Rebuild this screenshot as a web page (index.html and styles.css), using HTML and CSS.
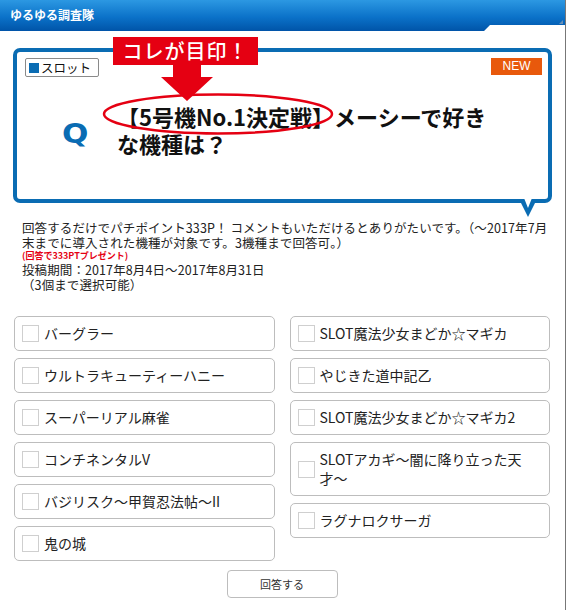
FILE: index.html
```html
<!DOCTYPE html>
<html lang="ja">
<head>
  <meta charset="UTF-8">
  <title>ゆるゆる調査隊</title>
  <link rel="stylesheet" href="styles.css">
</head>
<body>
  <div class="page">
    <div class="topbar">
      <h1>ゆるゆる調査隊</h1>
      <span class="grip"></span>
    </div>
    <div class="main">
      <div class="question">
        <div class="callout">
          コレが目印！
          <svg class="callout-arrow" width="54" height="36" viewBox="0 0 54 36">
            <polygon points="13,-1 41,-1 41,12 53,12 27,36 1,12 13,12" fill="#e50012"/>
          </svg>
        </div>
        <div class="q-head">
          <span class="genre"><i></i>スロット</span>
          <span class="new">NEW</span>
        </div>
        <div class="q-row">
          <span class="q-mark">Q</span>
          <p class="q-text">
            【5号機No.1決定戦】メーシーで好きな機種は？
            <svg class="ring" width="234" height="44" viewBox="0 0 234 44">
              <ellipse cx="117" cy="22" rx="114" ry="19.5" fill="none" stroke="#e50012" stroke-width="2.5"/>
            </svg>
          </p>
        </div>
        <svg class="tail" width="18" height="18" viewBox="0 0 18 18">
          <polygon points="0,0 18,0 9,18" fill="#0a6cb3"/>
          <polygon points="5,-1 13,-1 9,9" fill="#fff"/>
        </svg>
      </div>

      <div class="desc">
        <p>回答するだけでパチポイント333P！ コメントもいただけるとありがたいです。（〜2017年7月末までに導入された機種が対象です。3機種まで回答可。）</p>
        <p class="bonus">(回答で333PTプレゼント)</p>
        <p class="period">投稿期間：2017年8月4日〜2017年8月31日<br>（3個まで選択可能）</p>
      </div>

      <div class="choices">
        <div class="col">
          <label class="choice"><span class="box"></span><span>バーグラー</span></label>
          <label class="choice"><span class="box"></span><span>ウルトラキューティーハニー</span></label>
          <label class="choice"><span class="box"></span><span>スーパーリアル麻雀</span></label>
          <label class="choice"><span class="box"></span><span>コンチネンタルV</span></label>
          <label class="choice"><span class="box"></span><span>バジリスク〜甲賀忍法帖〜II</span></label>
          <label class="choice"><span class="box"></span><span>鬼の城</span></label>
        </div>
        <div class="col">
          <label class="choice"><span class="box"></span><span>SLOT魔法少女まどか☆マギカ</span></label>
          <label class="choice"><span class="box"></span><span>やじきた道中記乙</span></label>
          <label class="choice"><span class="box"></span><span>SLOT魔法少女まどか☆マギカ2</span></label>
          <label class="choice"><span class="box"></span><span>SLOTアカギ〜闇に降り立った天才〜</span></label>
          <label class="choice"><span class="box"></span><span>ラグナロクサーガ</span></label>
        </div>
      </div>

      <div class="actions">
        <button type="button">回答する</button>
      </div>
    </div>
  </div>
</body>
</html>
```

FILE: styles.css
```css
body {
  margin: 0;
  background: #fff;
  font-family: "Noto Sans CJK JP", "Noto Sans", sans-serif;
  color: #222;
}
p {
  margin: 0;
}
.page {
  width: 565px;
  min-height: 610px;
  border-right: 1px solid #777;
}
.topbar {
  position: relative;
  height: 31px;
  background: linear-gradient(#2c98e2, #0b72c9 55%, #0054a8);
  clip-path: polygon(0 0, 100% 0, 100% 25px, 490px 25px, 484px 31px, 0 31px);
}
.topbar h1 {
  margin: 0;
  padding-left: 10px;
  font-size: 12px;
  line-height: 30px;
  font-weight: bold;
  color: #fff;
}
.grip {
  position: absolute;
  right: 2px;
  top: 20px;
  border-left: 4px solid transparent;
  border-bottom: 4px solid #6b8fb5;
}
.main {
  padding: 0 15px 0 14px;
}

/* question bubble */
.question {
  position: relative;
  margin: 17px -2px 0 -1px;
  padding: 6px 6px 42px 8px;
  border: 4px solid #0a6cb3;
  border-radius: 7px;
}
.callout {
  position: absolute;
  left: 96px;
  top: -15px;
  width: 145px;
  height: 28px;
  background: #e50012;
  color: #fff;
  font-size: 20px;
  line-height: 28px;
  font-weight: 500;
  text-align: center;
  letter-spacing: 1px;
  z-index: 2;
}
.callout-arrow {
  position: absolute;
  left: 47px;
  top: 28px;
}
.q-head {
  display: flex;
  justify-content: space-between;
  align-items: flex-start;
}
.genre {
  display: flex;
  align-items: center;
  gap: 2px;
  height: 17px;
  width: 67px;
  padding: 0 2px 0 3px;
  border: 1px solid #8a8a8a;
  border-radius: 2px;
  font-size: 12.5px;
  color: #111;
}
.genre i {
  width: 10px;
  height: 10px;
  background: #0a6cb3;
}
.new {
  width: 51px;
  height: 17px;
  background: #e8590c;
  color: #fff;
  font-family: "Liberation Sans", Arial, sans-serif;
  font-size: 12px;
  line-height: 17px;
  text-align: center;
}
.q-row {
  display: flex;
  align-items: center;
  margin-top: 26px;
  padding-left: 37px;
}
.q-mark {
  width: 55px;
  flex: none;
  margin-top: 6px;
  font-family: "DejaVu Sans", sans-serif;
  font-weight: bold;
  font-size: 27px;
  color: #0a6cb3;
  transform: scaleX(1.15);
  transform-origin: left center;
}
.q-text {
  position: relative;
  width: 383px;
  font-size: 22px;
  line-height: 27px;
  font-weight: bold;
  color: #111;
}
.ring {
  position: absolute;
  left: -16px;
  top: -11px;
}
.tail {
  position: absolute;
  top: 100%;
  right: 11px;
}

/* description */
.desc {
  margin: 17px -2px 0 8px;
  font-size: 12.5px;
  line-height: 15px;
  letter-spacing: 0.1px;
  color: #222;
}
.bonus {
  font-size: 9px;
  line-height: 11px;
  font-weight: bold;
  letter-spacing: 0;
  color: #e50012;
}
.period {
  margin-top: 1px;
}

/* choices */
.choices {
  display: grid;
  grid-template-columns: 1fr 1fr;
  gap: 15px;
  margin-top: 24px;
}
.col {
  display: flex;
  flex-direction: column;
  gap: 7px;
}
.choice {
  display: flex;
  align-items: center;
  gap: 5px;
  padding: 7px 8px 7px 7px;
  border: 1px solid #bdbdbd;
  border-radius: 5px;
  font-size: 14px;
  line-height: 19px;
  color: #222;
}
.box {
  flex: none;
  width: 15px;
  height: 15px;
  border: 1px solid #cfcfcf;
  background: #fff;
}
.actions {
  display: flex;
  justify-content: center;
  margin-top: 9px;
}
.actions button {
  width: 111px;
  height: 28px;
  background: #fff;
  border: 1px solid #bdbdbd;
  border-radius: 4px;
  font-family: "Noto Sans CJK JP", sans-serif;
  font-size: 11px;
  color: #333;
}
```
